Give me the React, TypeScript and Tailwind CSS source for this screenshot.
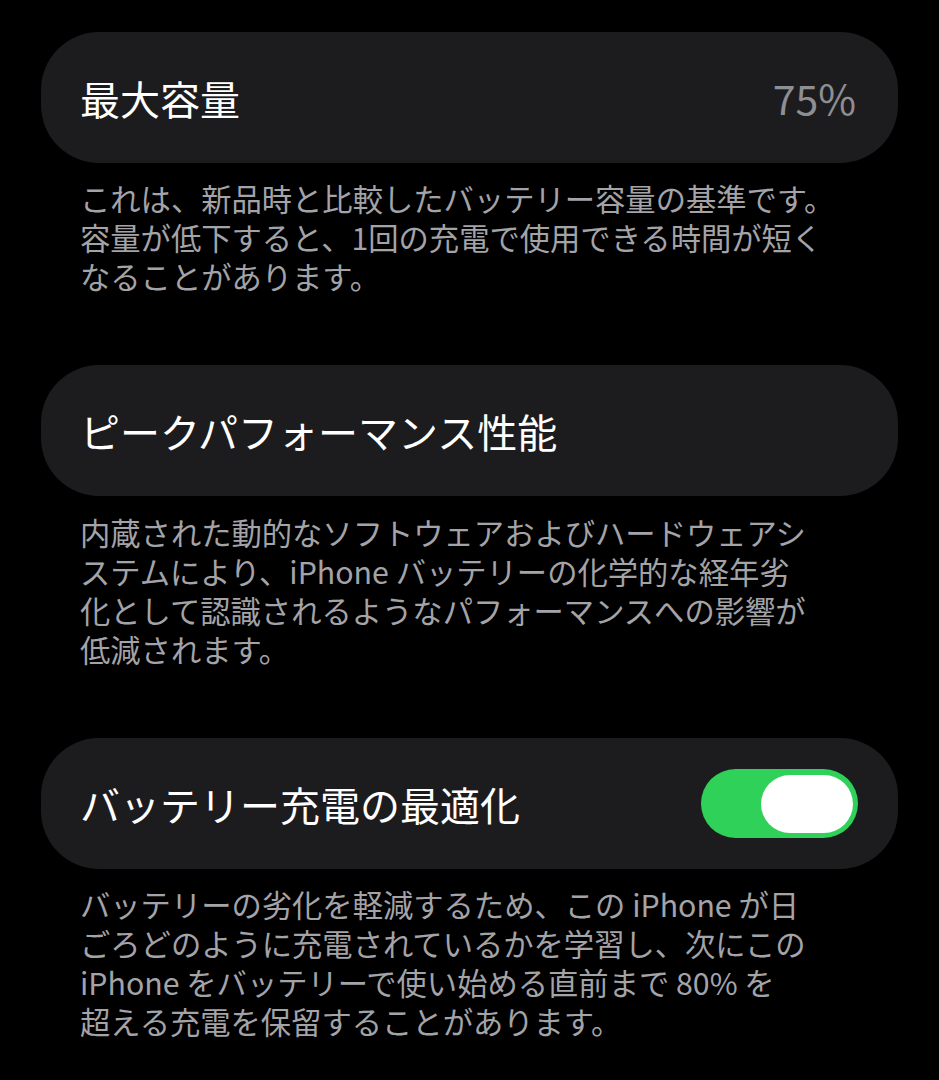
import React from "react";

const font = { fontFamily: '"Noto Sans CJK JP", "Noto Sans", sans-serif' };

function Card({ children }: { children: React.ReactNode }) {
  return (
    <div className="flex h-[131px] items-center justify-between rounded-[58px] bg-[#1c1c1e] pl-[39px] pr-[40px]">
      {children}
    </div>
  );
}

function Note({ lines, className = "" }: { lines: string[]; className?: string }) {
  return (
    <div className={`pl-[39px] text-[30.3px] leading-[39px] text-[#a3a3a8] ${className}`}>
      {lines.map((l) => (
        <div key={l} className="whitespace-pre">
          {l}
        </div>
      ))}
    </div>
  );
}

function Toggle({ on }: { on: boolean }) {
  return (
    <div
      className={`flex h-[69px] w-[157px] items-center rounded-full px-[5px] ${on ? "justify-end bg-[#30d158]" : "justify-start bg-[#39393d]"}`}
    >
      <div className="h-[58px] w-[92px] rounded-full bg-white" />
    </div>
  );
}

export default function App() {
  return (
    <div className="min-h-screen w-full bg-black px-[41px] pt-[32px] text-white" style={font}>
      {/* 最大容量 */}
      <Card>
        <span className="text-[40px] leading-none">最大容量</span>
        <span className="pr-[2px] text-[41px] leading-none text-[#8e8e93]">75%</span>
      </Card>
      <Note
        className="mt-[16px] mb-[69px]"
        lines={[
          "これは、新品時と比較したバッテリー容量の基準です。",
          "容量が低下すると、1回の充電で使用できる時間が短く",
          "なることがあります。",
        ]}
      />

      {/* ピークパフォーマンス性能 */}
      <Card>
        <span className="text-[40px] leading-none">ピークパフォーマンス性能</span>
      </Card>
      <Note
        className="mt-[17px] mb-[69px]"
        lines={[
          "内蔵された動的なソフトウェアおよびハードウェアシ",
          "ステムにより、iPhone バッテリーの化学的な経年劣",
          "化として認識されるようなパフォーマンスへの影響が",
          "低減されます。",
        ]}
      />

      {/* バッテリー充電の最適化 */}
      <Card>
        <span className="text-[40px] leading-none">バッテリー充電の最適化</span>
        <Toggle on />
      </Card>
      <Note
        className="mt-[16px]"
        lines={[
          "バッテリーの劣化を軽減するため、この iPhone が日",
          "ごろどのように充電されているかを学習し、次にこの",
          "iPhone をバッテリーで使い始める直前まで 80% を",
          "超える充電を保留することがあります。",
        ]}
      />
    </div>
  );
}
